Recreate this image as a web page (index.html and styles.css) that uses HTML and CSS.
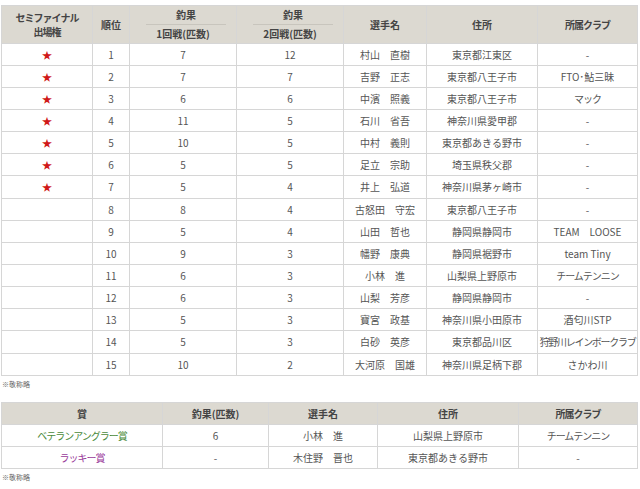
FILE: index.html
```html
<!DOCTYPE html>
<html lang="ja">
<head>
<meta charset="utf-8">
<link rel="stylesheet" href="styles.css">
</head>
<body>
<table class="tbl main">
  <colgroup>
    <col class="c1"><col class="c2"><col class="c3"><col class="c4"><col class="c5"><col class="c6"><col class="c7">
  </colgroup>
  <thead>
    <tr>
      <th class="kana">セミファイナル<br>出場権</th>
      <th>順位</th>
      <th><span class="top">釣果</span><span class="sub">1回戦(匹数)</span></th>
      <th><span class="top">釣果</span><span class="sub">2回戦(匹数)</span></th>
      <th>選手名</th>
      <th>住所</th>
      <th class="kana">所属クラブ</th>
    </tr>
  </thead>
  <tbody>
    <tr><td class="star">★</td><td>1</td><td>7</td><td>12</td><td>村山　直樹</td><td>東京都江東区</td><td>-</td></tr>
    <tr><td class="star">★</td><td>2</td><td>7</td><td>7</td><td>吉野　正志</td><td>東京都八王子市</td><td>FTO･鮎三昧</td></tr>
    <tr><td class="star">★</td><td>3</td><td>6</td><td>6</td><td>中濱　照義</td><td>東京都八王子市</td><td class="kana">マック</td></tr>
    <tr><td class="star">★</td><td>4</td><td>11</td><td>5</td><td>石川　省吾</td><td>神奈川県愛甲郡</td><td>-</td></tr>
    <tr><td class="star">★</td><td>5</td><td>10</td><td>5</td><td>中村　義則</td><td>東京都あきる野市</td><td>-</td></tr>
    <tr><td class="star">★</td><td>6</td><td>5</td><td>5</td><td>足立　宗助</td><td>埼玉県秩父郡</td><td>-</td></tr>
    <tr><td class="star">★</td><td>7</td><td>5</td><td>4</td><td>井上　弘道</td><td>神奈川県茅ヶ崎市</td><td>-</td></tr>
    <tr><td></td><td>8</td><td>8</td><td>4</td><td>古怒田　守宏</td><td>東京都八王子市</td><td>-</td></tr>
    <tr><td></td><td>9</td><td>5</td><td>4</td><td>山田　哲也</td><td>静岡県静岡市</td><td>TEAM　LOOSE</td></tr>
    <tr><td></td><td>10</td><td>9</td><td>3</td><td>幡野　康典</td><td>静岡県裾野市</td><td>team Tiny</td></tr>
    <tr><td></td><td>11</td><td>6</td><td>3</td><td>小林　進</td><td>山梨県上野原市</td><td class="kana">チームテンニン</td></tr>
    <tr><td></td><td>12</td><td>6</td><td>3</td><td>山梨　芳彦</td><td>静岡県静岡市</td><td>-</td></tr>
    <tr><td></td><td>13</td><td>5</td><td>3</td><td>寶宮　政基</td><td>神奈川県小田原市</td><td>酒匂川STP</td></tr>
    <tr><td></td><td>14</td><td>5</td><td>3</td><td>白砂　英彦</td><td>東京都品川区</td><td class="kana tighter">狩野川レインボークラブ</td></tr>
    <tr><td></td><td>15</td><td>10</td><td>2</td><td>大河原　国雄</td><td>神奈川県足柄下郡</td><td>さかわ川</td></tr>
  </tbody>
</table>
<p class="note">※敬称略</p>

<table class="tbl prize">
  <colgroup>
    <col class="p1"><col class="p2"><col class="p3"><col class="p4"><col class="p5">
  </colgroup>
  <thead>
    <tr><th>賞</th><th>釣果(匹数)</th><th>選手名</th><th>住所</th><th class="kana">所属クラブ</th></tr>
  </thead>
  <tbody>
    <tr><td class="green kana">ベテランアングラー賞</td><td>6</td><td>小林　進</td><td>山梨県上野原市</td><td class="kana">チームテンニン</td></tr>
    <tr><td class="purple kana">ラッキー賞</td><td>-</td><td>木住野　晋也</td><td>東京都あきる野市</td><td>-</td></tr>
  </tbody>
</table>
<p class="note">※敬称略</p>
</body>
</html>
```

FILE: styles.css
```css
html, body {
  margin: 0;
  padding: 0;
  background: #ffffff;
}
body {
  padding: 5px 3px 0 1px;
  font-family: "Noto Sans CJK JP", "Noto Sans", sans-serif;
  color: #555555;
}
.tbl {
  border-collapse: collapse;
  table-layout: fixed;
  width: 636px;
}
.tbl th, .tbl td {
  border: 1px solid #d6d6d6;
  text-align: center;
  vertical-align: middle;
  padding: 0;
  overflow: hidden;
  white-space: nowrap;
}
.tbl th {
  background: #dcd9d1;
  color: #444444;
  font-size: 10px;
  font-weight: bold;
  line-height: 14px;
}
.tbl td {
  font-size: 10px;
  line-height: 12px;
}
.kana {
  letter-spacing: -1px;
}
.tighter {
  letter-spacing: -1.3px;
}
.main thead th {
  height: 37px;
}
.main tbody td {
  height: 21px;
}
.main tbody tr:nth-child(7n) td {
  height: 22px;
}
.top {
  display: block;
  margin: 0 10px 0 16px;
  padding-bottom: 2px;
  border-bottom: 1px solid #c8c5bd;
}
.sub {
  display: block;
  padding-top: 2px;
}
.c1 { width: 91px; }
.c2 { width: 37px; }
.c3 { width: 107px; }
.c4 { width: 107px; }
.c5 { width: 83px; }
.c6 { width: 111px; }
.c7 { width: 100px; }
.star {
  color: #d01818;
  font-size: 12px;
}
.note {
  margin: 3px 0 13px 1px;
  font-size: 7px;
  line-height: 10px;
  height: 10px;
  color: #666666;
}
.prize th {
  height: 21px;
}
.prize td {
  height: 21px;
}
.p1 { width: 161px; }
.p2 { width: 106px; }
.p3 { width: 109px; }
.p4 { width: 141px; }
.p5 { width: 119px; }
.green { color: #4a8a3a; }
.purple { color: #9a3a9a; }
```
